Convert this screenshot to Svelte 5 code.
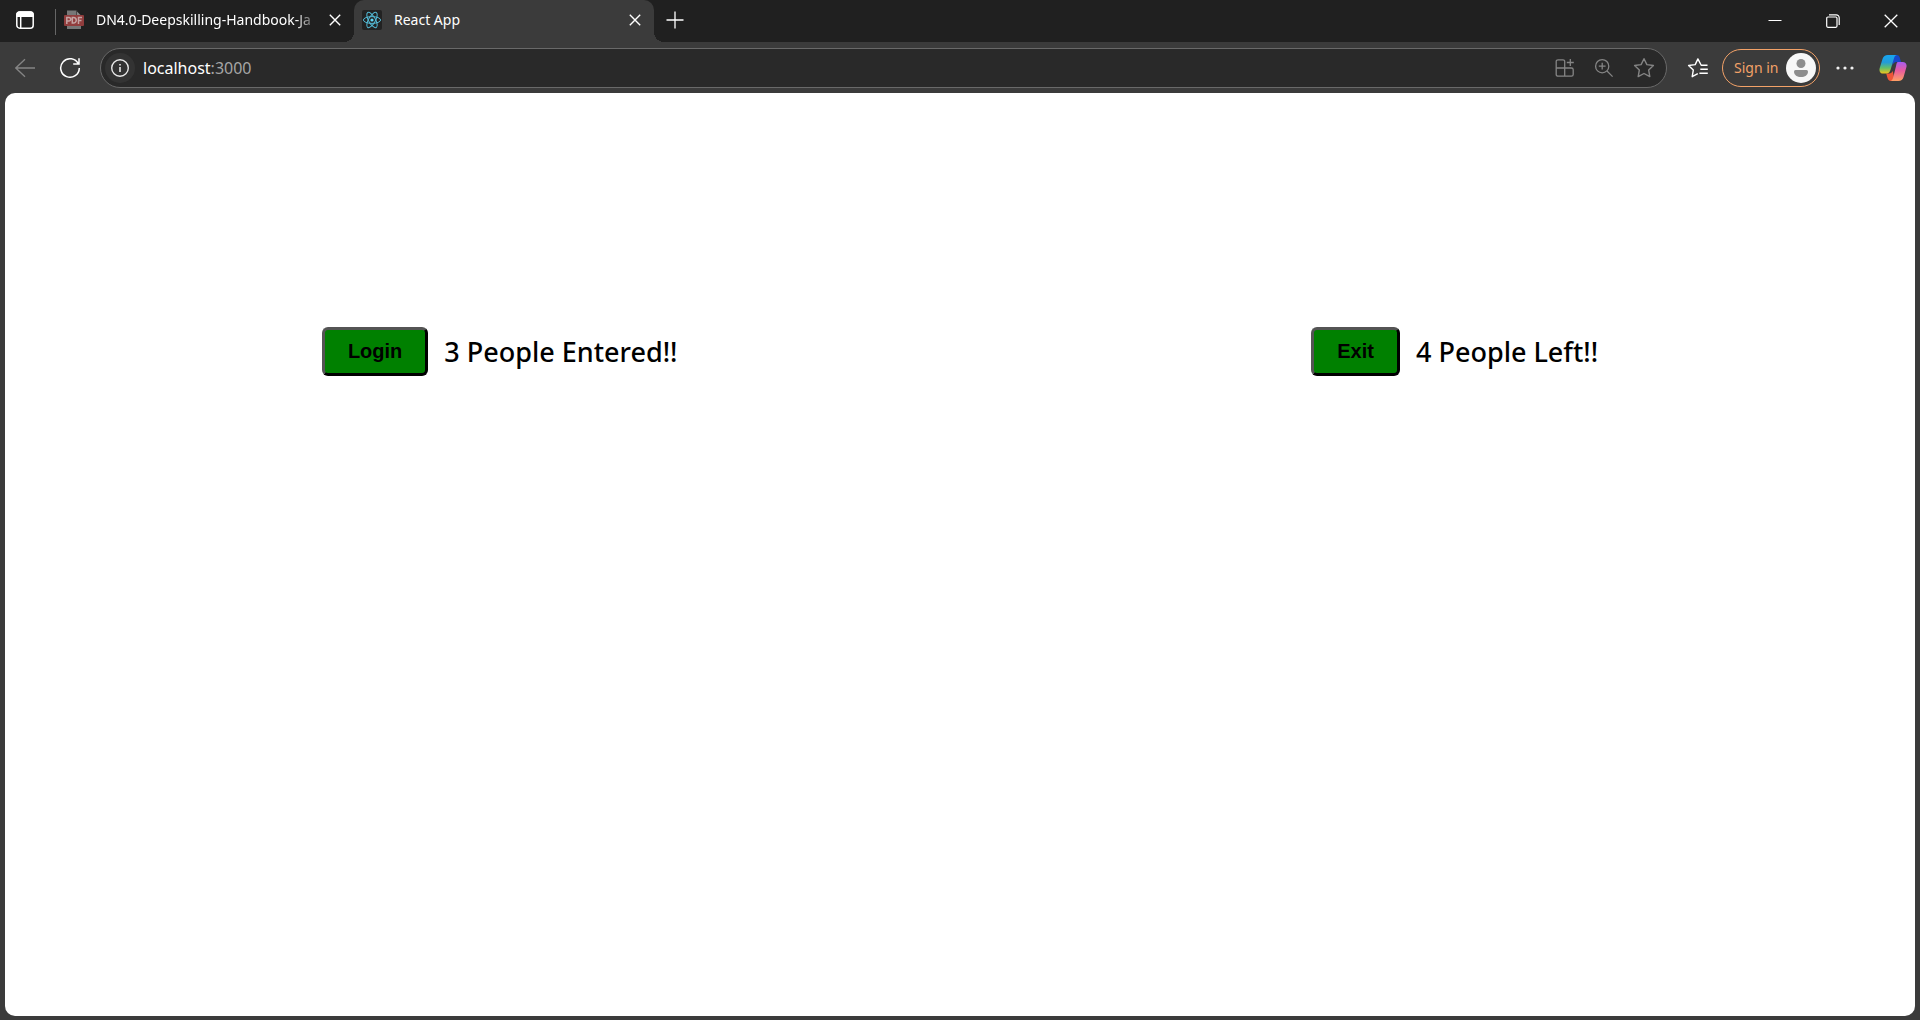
<script>
  let entered = $state(3);
  let left = $state(4);
  let address = $state('');
</script>

<div class="browser">
  <header class="tabs">
    <button class="icon-btn workspace" aria-label="Tab actions">
      <svg width="20" height="20" viewBox="0 0 20 20" fill="none" stroke="#fff" stroke-width="1.5">
        <rect x="1.8" y="2" width="16.4" height="16.2" rx="3" />
        <path d="M2 4.6a2.6 2.6 0 0 1 2.6-2.6h10.8a2.6 2.6 0 0 1 2.6 2.6v1.7H2z" fill="#fff" />
        <path d="M5.7 6v12" />
      </svg>
    </button>
    <span class="divider"></span>
    <div class="tab">
      <svg class="favicon" width="20" height="20" viewBox="0 0 20 20">
        <path d="M3 .5h10l4 4.5v14H3z" fill="#777" />
        <path d="M12.5 0 18 5.5h-5.5z" fill="#1a1a1a" />
        <path d="M13 1.5 16.5 5H13z" fill="#8a8a8a" />
        <rect y="5" width="20" height="11" rx="1" fill="#913d3d" />
        <path d="M2.8 14V7.5h2.1a1.7 1.7 0 0 1 0 3.6H2.8M8.3 7.5V13h1.2a2.75 2.75 0 0 0 0-5.5zM14.5 14V7.5H18M14.5 10.5h3" fill="none" stroke="#c5a4a4" stroke-width="1.5" />
      </svg>
      <span class="title fade">DN4.0-Deepskilling-Handbook-Ja</span>
      <button class="icon-btn close" aria-label="Close handbook tab">
        <svg width="12" height="12" viewBox="0 0 12 12" stroke="#fff" stroke-width="1.4"><path d="m.8.8 10.4 10.4M11.2.8.8 11.2" /></svg>
      </button>
    </div>
    <div class="tab active">
      <svg class="favicon" width="20" height="20" viewBox="0 0 20 20" fill="none" stroke="#53b9d4" stroke-width="1">
        <rect width="20" height="20" rx="2" fill="#222" stroke="none" />
        <ellipse cx="10" cy="10" rx="8.6" ry="3.4" />
        <ellipse cx="10" cy="10" rx="8.6" ry="3.4" transform="rotate(60 10 10)" />
        <ellipse cx="10" cy="10" rx="8.6" ry="3.4" transform="rotate(120 10 10)" />
        <circle cx="10" cy="10" r="1.6" fill="#61dafb" stroke="none" />
      </svg>
      <span class="title">React App</span>
      <button class="icon-btn close" aria-label="Close React App tab">
        <svg width="12" height="12" viewBox="0 0 12 12" stroke="#fff" stroke-width="1.4"><path d="m.8.8 10.4 10.4M11.2.8.8 11.2" /></svg>
      </button>
    </div>
    <button class="icon-btn new-tab" aria-label="New tab">
      <svg width="18" height="18" viewBox="0 0 18 18" stroke="#fff" stroke-width="1.3"><path d="M9 .5v17M.5 9h17" /></svg>
    </button>
    <div class="window-controls">
      <button class="icon-btn" aria-label="Minimize">
        <svg width="14" height="14" viewBox="0 0 14 14" stroke="#fff"><path d="M.5 6.5h13" /></svg>
      </button>
      <button class="icon-btn" aria-label="Restore">
        <svg width="14" height="14" viewBox="0 0 14 14" fill="none" stroke="#fff" stroke-width="1.2"><rect x=".7" y="3" width="10.3" height="10.3" rx="1.2" /><path d="M3 .8h7.2a3 3 0 0 1 3 3V11" /></svg>
      </button>
      <button class="icon-btn" aria-label="Close window">
        <svg width="14" height="14" viewBox="0 0 14 14" stroke="#fff" stroke-width="1.3"><path d="m.7.7 12.6 12.6M13.3.7.7 13.3" /></svg>
      </button>
    </div>
  </header>

  <nav class="toolbar">
    <button class="icon-btn back" aria-label="Back">
      <svg width="20" height="20" viewBox="0 0 20 20" fill="none" stroke="#858585" stroke-width="1.3"><path d="M20 10H.8M10 1.2.8 10l9.2 8.8" /></svg>
    </button>
    <button class="icon-btn reload" aria-label="Refresh">
      <svg width="22" height="22" viewBox="0 0 22 22" fill="none" stroke="#fff" stroke-width="1.5"><path d="M19.4 7A9.3 9.3 0 1 0 20.3 11M20 1.3V7h-5.8" /></svg>
    </button>
    <div class="address">
      <button class="icon-btn info" aria-label="View site information">
        <svg width="20" height="20" viewBox="0 0 20 20" fill="none" stroke="#e8e8e8" stroke-width="1.4"><circle cx="10" cy="10" r="8.3" /><path d="M10 9v5M10 6v1.6" stroke-width="1.6" /></svg>
      </button>
      <label class="url">
        <span>localhost<span class="port">:3000</span></span>
        <input type="text" aria-label="Address" bind:value={address} />
      </label>
      <button class="icon-btn" aria-label="Apps">
        <svg width="20" height="20" viewBox="0 0 20 20" fill="none" stroke="#858585" stroke-width="1.3"><path d="M9.7 18.2H3A1.8 1.8 0 0 1 1.2 16.4V3.6A1.8 1.8 0 0 1 3 1.8h5a1.7 1.7 0 0 1 1.7 1.7zM1.2 10h15.2a1.8 1.8 0 0 1 1.8 1.8v4.6a1.8 1.8 0 0 1-1.8 1.8H9.7M15.3 1v7M11.8 4.5h7" /></svg>
      </button>
      <button class="icon-btn" aria-label="Zoom">
        <svg width="20" height="20" viewBox="0 0 20 20" fill="none" stroke="#858585" stroke-width="1.3"><circle cx="8.2" cy="8.2" r="6.6" /><path d="m13 13 5.6 5.6M8.2 4.8v6.8M4.8 8.2h6.8" /></svg>
      </button>
      <button class="icon-btn" aria-label="Add to favorites">
        <svg width="22" height="22" viewBox="0 0 22 22" fill="none" stroke="#858585" stroke-width="1.4" stroke-linejoin="round"><path d="m11 1.7 2.9 5.9 6.5.9-4.7 4.6 1.1 6.5-5.8-3.1-5.8 3.1 1.1-6.5L1.6 8.5l6.5-.9z" /></svg>
      </button>
    </div>
    <button class="icon-btn favorites" aria-label="Favorites">
      <svg width="22" height="22" viewBox="0 0 22 22" fill="none" stroke="#fff" stroke-width="1.4" stroke-linejoin="round"><path d="M20.5 8.2h-6.3l-3.3-6.3-2.7 5.7-6.6.9 4.7 4.6-1.1 6.6 5.6-3M13.3 12.2h7.5M12.4 16.2h8.4" /></svg>
    </button>
    <button class="sign-in">
      <span>Sign in</span>
      <svg width="30" height="30" viewBox="0 0 30 30"><circle cx="15" cy="15" r="15" fill="#f7f7f7" /><circle cx="15" cy="10.5" r="4.5" fill="#8d8d8d" /><path d="M8 18.5q0-1.5 1.5-1.5h11q1.5 0 1.5 1.5c0 3.7-3.2 5.5-7 5.5s-7-1.8-7-5.5z" fill="#8d8d8d" /></svg>
    </button>
    <button class="icon-btn more" aria-label="Settings and more">
      <svg width="18" height="4" viewBox="0 0 18 4" fill="#f2f2f2"><circle cx="2" cy="2" r="1.6" /><circle cx="9" cy="2" r="1.6" /><circle cx="16" cy="2" r="1.6" /></svg>
    </button>
    <button class="icon-btn copilot" aria-label="Copilot">
      <svg width="28" height="28" viewBox="0 0 28 28">
        <defs>
          <linearGradient id="cool" x1="0" y1="0" x2="0" y2="1"><stop offset="0" stop-color="#16a5f0" /><stop offset=".4" stop-color="#239bd8" /><stop offset=".7" stop-color="#63bf68" /><stop offset="1" stop-color="#f0c51c" /></linearGradient>
          <linearGradient id="warm" x1="0" y1="0" x2="0" y2="1"><stop offset="0" stop-color="#a75cf0" /><stop offset=".45" stop-color="#e85b9f" /><stop offset="1" stop-color="#ffa064" /></linearGradient>
        </defs>
        <path d="M13 1h4.6c1.9 0 2.7 1.2 3.2 2.8L22 8h-4.5c-2.2 0-3.3 1.4-3.9 3.5z" fill="#1747c9" />
        <path d="M7.2 19.5h3c1.8 0 2.9-1 3.5-2.8l1.5 7.3q.4 2.5 1.8 3H12c-2.2 0-3-1.3-3.6-3.2z" fill="#ee5638" />
        <path d="M8.9 1h8.9c-1.7.2-2.5 2-3.1 4.3l-3 10c-.8 2.8-1.8 4.2-4.4 4.2H4.4c-3 0-4.7-2-3.6-5.7L3.5 5C4.3 2.3 6.2 1 8.9 1z" fill="url(#cool)" />
        <path d="M19.3 8h4.3c3 0 4.7 2.2 3.7 5.6L24.6 23c-.8 2.7-2.5 4-5.2 4h-7.9c1.7-.3 2.3-2 2.9-4.4l2.6-10.3C17.6 9.7 17.5 8 19.3 8z" fill="url(#warm)" />
      </svg>
    </button>
  </nav>

  <main>
    <section>
      <button class="action" onclick={() => entered++}>Login</button>
      <h2>{entered} People Entered!!</h2>
    </section>
    <section>
      <button class="action" onclick={() => left++}>Exit</button>
      <h2>{left} People Left!!</h2>
    </section>
  </main>
</div>

<style>
  :global(body) { margin: 0; background: #3b3b3b; }
  .browser {
    min-height: 100vh;
    box-sizing: border-box;
    padding-bottom: 4px;
    display: flex;
    flex-direction: column;
    background: #3b3b3b;
    color: #fff;
    font-family: "Noto Sans", "Open Sans", sans-serif;
  }
  button { font: inherit; color: inherit; }
  svg { display: block; flex: none; }
  .icon-btn {
    display: flex;
    align-items: center;
    justify-content: center;
    padding: 0;
    border: 0;
    background: none;
    flex: none;
  }
  .tabs { height: 42px; display: flex; background: #202020; }
  .workspace { width: 50px; height: 40px; }
  .divider { width: 1px; height: 26px; margin: 9px 0 0 5px; background: #666; }
  .tab {
    box-sizing: border-box;
    display: flex;
    align-items: center;
    width: 298px;
    height: 42px;
    padding: 0 9px 2px 8px;
    font-size: 14px;
    line-height: 20px;
  }
  .title { flex: 1; margin: 0 6px 0 12px; overflow: hidden; white-space: nowrap; }
  .fade { mask-image: linear-gradient(to right, #000 calc(100% - 24px), transparent); }
  .active {
    position: relative;
    width: 300px;
    background: #3b3b3b;
    border-radius: 10px 10px 0 0;
  }
  .active::before,
  .active::after {
    content: "";
    position: absolute;
    bottom: 0;
    width: 10px;
    height: 10px;
  }
  .active::before { right: 100%; background: radial-gradient(circle at 0 0, transparent 10px, #3b3b3b 10px); }
  .active::after { left: 100%; background: radial-gradient(circle at 100% 0, transparent 10px, #3b3b3b 10px); }
  .close { width: 20px; height: 20px; }
  .new-tab { width: 42px; height: 40px; }
  .window-controls { display: flex; margin-left: auto; }
  .window-controls button { width: 58px; height: 42px; }

  .toolbar {
    height: 51px;
    display: flex;
    align-items: center;
  }
  .back { width: 50px; height: 40px; }
  .reload { width: 40px; height: 40px; margin-right: 10px; }
  .address {
    flex: 1;
    box-sizing: border-box;
    height: 40px;
    display: flex;
    align-items: center;
    gap: 19px;
    padding: 0 11px 0 4px;
    border: 1px solid #696969;
    border-radius: 20px;
    background: #292929;
  }
  .info { width: 30px; height: 30px; border-radius: 50%; background: #333; }
  .url { flex: 1; display: flex; align-items: center; margin-left: -11px; font-size: 16px; line-height: 24px; }
  .port { color: #a5a5a5; }
  .url input { flex: 1; min-width: 0; border: 0; padding: 0; outline: 0; background: none; color: inherit; font: inherit; }
  .favorites { width: 40px; height: 40px; margin-left: 11px; }
  .sign-in {
    box-sizing: border-box;
    width: 98px;
    height: 38px;
    display: flex;
    align-items: center;
    justify-content: space-between;
    margin-left: 4px;
    padding: 0 3px 0 11px;
    border: 1px solid #f3a268;
    border-radius: 19px;
    background: none;
    color: #f3a268;
    font-size: 14px;
    white-space: nowrap;
  }
  .more { width: 50px; height: 40px; }
  .copilot { width: 46px; height: 40px; margin-right: 4px; }

  main {
    flex: 1;
    display: flex;
    justify-content: space-around;
    align-items: flex-start;
    margin: 0 5px;
    padding-top: 234px;
    border-radius: 10px;
    background: #fff;
    color: #000;
  }
  section { display: flex; align-items: center; gap: 16px; }
  .action {
    padding: 10px 23px;
    border: 3px outset #000;
    border-radius: 6px;
    background: #008000;
    color: #000;
    font: bold 20px/23px "Liberation Sans", Arial, sans-serif;
  }
  h2 { margin: 0; font: 500 27px/40px "Noto Sans", "Open Sans", sans-serif; }
</style>
